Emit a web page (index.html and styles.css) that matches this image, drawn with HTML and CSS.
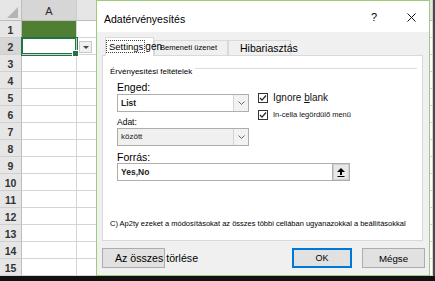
FILE: index.html
```html
<!DOCTYPE html>
<html lang="hu">
<head>
<meta charset="utf-8">
<title>Adatérvényesítés</title>
<link rel="stylesheet" href="styles.css">
</head>
<body>
<div class="screen">
  <div class="sheet">
    <div class="corner"><svg width="11" height="11" viewBox="0 0 11 11"><polygon points="11,0 11,11 0,11" fill="#b4b4b4"/></svg></div>
    <div class="colhdr sel">A</div>
    <div class="colhdr"></div>
    <div class="edge"></div>

    <div class="rowhdr">1</div><div class="cell fill"></div><div class="cell"></div><div class="edge"></div>
    <div class="rowhdr sel">2</div><div class="cell active"></div><div class="cell dd"><span class="ddbtn"><span class="tri"></span></span></div><div class="edge"></div>
    <div class="rowhdr">3</div><div class="cell"></div><div class="cell"></div><div class="edge"></div>
    <div class="rowhdr">4</div><div class="cell"></div><div class="cell"></div><div class="edge"></div>
    <div class="rowhdr">5</div><div class="cell"></div><div class="cell"></div><div class="edge"></div>
    <div class="rowhdr">6</div><div class="cell"></div><div class="cell"></div><div class="edge"></div>
    <div class="rowhdr">7</div><div class="cell"></div><div class="cell"></div><div class="edge"></div>
    <div class="rowhdr">8</div><div class="cell"></div><div class="cell"></div><div class="edge"></div>
    <div class="rowhdr">9</div><div class="cell"></div><div class="cell"></div><div class="edge"></div>
    <div class="rowhdr">10</div><div class="cell"></div><div class="cell"></div><div class="edge"></div>
    <div class="rowhdr">11</div><div class="cell"></div><div class="cell"></div><div class="edge"></div>
    <div class="rowhdr">12</div><div class="cell"></div><div class="cell"></div><div class="edge"></div>
    <div class="rowhdr">13</div><div class="cell"></div><div class="cell"></div><div class="edge"></div>
    <div class="rowhdr">14</div><div class="cell"></div><div class="cell"></div><div class="edge"></div>
    <div class="rowhdr">15</div><div class="cell"></div><div class="cell"></div><div class="edge"></div>
  </div>
  <div class="taskbar"></div>

  <div class="dialog">
    <div class="titlebar">
      <span class="title">Adatérvényesítés</span>
      <div class="ctrls">
        <span class="help">?</span>
        <span class="close"><svg width="9" height="9" viewBox="0 0 9 9"><path d="M0.5 0.5 L8.5 8.5 M8.5 0.5 L0.5 8.5" stroke="#111" stroke-width="1" fill="none"/></svg></span>
      </div>
    </div>
    <div class="body">
      <div class="tabs">
        <div class="tab sel"><span class="focus">Settings</span><span class="gen">gen</span></div>
        <div class="tab t2">Bemeneti üzenet</div>
        <div class="tab t3">Hibariasztás</div>
      </div>
      <div class="panel">
        <div class="grp"><span class="grp-label">Érvényesítési feltételek</span><span class="grp-line"></span></div>
        <div class="form">
          <div class="top">
            <div class="left">
              <div class="lbl big">Enged:</div>
              <div class="select">
                <span class="val">List</span>
                <span class="arrow"><svg width="7" height="4" viewBox="0 0 7 4"><path d="M0.5 0.5 L3.5 3.5 L6.5 0.5" fill="none" stroke="#666" stroke-width="1"/></svg></span>
              </div>
              <div class="lbl small">Adat:</div>
              <div class="select dis">
                <span class="val thin">között</span>
                <span class="arrow"><svg width="7" height="4" viewBox="0 0 7 4"><path d="M0.5 0.5 L3.5 3.5 L6.5 0.5" fill="none" stroke="#666" stroke-width="1"/></svg></span>
              </div>
            </div>
            <div class="right">
              <div class="chk first">
                <svg width="10" height="10" viewBox="0 0 10 10"><rect x="0.5" y="0.5" width="9" height="9" fill="#fff" stroke="#333"/><path d="M2 5 L4 7.2 L8 2.5" fill="none" stroke="#222" stroke-width="1.2"/></svg>
                <span class="chk-text">Ignore <u>b</u>lank</span>
              </div>
              <div class="chk second">
                <svg width="10" height="10" viewBox="0 0 10 10"><rect x="0.5" y="0.5" width="9" height="9" fill="#fff" stroke="#333"/><path d="M2 5 L4 7.2 L8 2.5" fill="none" stroke="#222" stroke-width="1.2"/></svg>
                <span class="chk-text tiny">In-cella legördülő menü</span>
              </div>
            </div>
          </div>
          <div class="lbl big src">Forrás:</div>
          <div class="input">
            <span class="val">Yes,No</span>
            <span class="range"><svg width="8" height="9" viewBox="0 0 8 9"><polygon points="4,0 0,4 8,4" fill="#000"/><rect x="3" y="4" width="2" height="3" fill="#000"/><rect x="0.5" y="8" width="7" height="1" fill="#000"/></svg></span>
          </div>
        </div>
        <div class="note">C) Ap2ty ezeket a módosításokat az összes többi cellában ugyanazokkal a beállításokkal</div>
      </div>
      <div class="buttons">
        <div class="btn clear">Az összes törlése</div>
        <div class="btn ok">OK</div>
        <div class="btn cancel">Mégse</div>
      </div>
    </div>
  </div>
</div>
</body>
</html>
```

FILE: styles.css
```css
* { box-sizing: border-box; margin: 0; padding: 0; }
html, body { width: 435px; height: 281px; overflow: hidden; background: #fff; }
body { font-family: "Liberation Sans", Arial, sans-serif; color: #000; }

.screen { position: relative; width: 435px; height: 281px; overflow: hidden; display: flex; flex-direction: column; }

/* spreadsheet */
.sheet { display: grid; grid-template-columns: 22px 55px 1fr 2px; grid-template-rows: 21px repeat(15, 17px); height: 276px; }
.corner { background: #e6e6e6; border-right: 1px solid #bdbdbd; border-bottom: 1px solid #bdbdbd; display: flex; align-items: flex-end; justify-content: flex-end; padding: 0 3px 2px 0; }
.colhdr { background: #e6e6e6; border-right: 1px solid #cdcdcd; border-bottom: 1px solid #bdbdbd; display: flex; align-items: center; justify-content: center; font-size: 11px; color: #2b2b2b; padding-top: 2px; }
.colhdr.sel { background: #d6d6d6; }
.rowhdr { background: #e6e6e6; border-right: 1px solid #bdbdbd; border-bottom: 1px solid #d0d0d0; display: flex; align-items: center; justify-content: center; font-size: 10.5px; font-weight: bold; color: #333; padding-top: 1px; }
.rowhdr.sel { background: #d6d6d6; }
.cell { background: #fff; border-right: 1px solid #d4d4d4; border-bottom: 1px solid #d4d4d4; }
.cell.fill { background: #507e32; }
.cell.active { position: relative; z-index: 1; box-shadow: 0 0 0 1px #217346, inset 0 0 0 1px #217346; }
.cell.active::after { content: ""; position: absolute; right: -3px; bottom: -3px; width: 5px; height: 5px; background: #217346; border: 1px solid #fff; }
.cell.dd { display: flex; align-items: center; padding: 2px 0 0 2px; }
.ddbtn { width: 13px; height: 12px; background: #f0f0f0; border: 1px solid #c8c8c8; display: flex; align-items: center; justify-content: center; }
.tri { width: 0; height: 0; border-left: 3px solid transparent; border-right: 3px solid transparent; border-top: 3px solid #444; }
.edge { background: #4a4a4a; }
.taskbar { height: 5px; background: #111; }

/* dialog */
.dialog { position: absolute; left: 96px; top: 0; width: 334px; height: 276px; border: 1px solid #9ccb7a; background: #f0f0f0; display: flex; flex-direction: column; }
.titlebar { height: 31px; background: #fff; display: flex; align-items: center; padding: 5px 0 0 7px; }
.title { font-size: 10.5px; line-height: 14px; }
.ctrls { margin-left: auto; display: flex; align-items: center; margin-top: -4px; }
.help { width: 14px; text-align: center; font-size: 11px; line-height: 12px; margin-right: 12px; }
.close { width: 36px; display: flex; justify-content: center; }

.body { flex: 1; display: flex; flex-direction: column; padding: 5px 6px 7px 5px; }

.tabs { height: 18px; display: flex; align-items: flex-end; padding-left: 3px; position: relative; z-index: 1; }
.tab { height: 15px; border: 1px solid #d9d9d9; border-bottom: none; background: #f0f0f0; white-space: nowrap; }
.tab.sel { width: 49px; height: 19px; margin-bottom: -1px; background: #fff; padding: 2px 0 0 0; display: flex; align-items: flex-start; overflow: visible; position: relative; z-index: 2; }
.focus { display: inline-block; border: 1px dotted #444; padding: 0 1px 0 2px; font-size: 9.5px; line-height: 11px; height: 13px; }
.gen { font-size: 10px; line-height: 13px; }
.tab.t2 { width: 74px; padding: 1px 0 0 5px; font-size: 7.6px; line-height: 12px; }
.tab.t3 { width: 63px; padding: 0 0 0 11px; font-size: 10.5px; line-height: 14px; overflow: visible; }

.panel { height: 186px; background: #fff; border: 1px solid #d9d9d9; padding: 0 5px 0 7px; display: flex; flex-direction: column; }
.grp { margin-top: 10px; display: flex; height: 11px; }
.grp-label { font-size: 8px; line-height: 11px; white-space: nowrap; }
.grp-line { flex: 1; height: 1px; background: #dcdcdc; margin: 2px 0 0 3px; }

.form { margin-left: 7px; display: flex; flex-direction: column; }
.top { display: flex; }
.left { width: 132px; display: flex; flex-direction: column; }
.lbl.big { font-size: 10.5px; line-height: 14px; margin-top: 3px; }
.lbl.small { font-size: 8.5px; line-height: 12px; margin-top: 4px; }
.lbl.src { margin-top: 6px; line-height: 11px; }

.select { height: 18px; border: 1px solid #adadad; background: #fff; display: flex; }
.select.dis { background: #f0f0f0; }
.val { flex: 1; padding-left: 3px; font-size: 8.5px; font-weight: bold; line-height: 16px; color: #222; }
.val.thin { font-weight: normal; font-size: 8px; }
.arrow { width: 15px; border-left: 1px solid #d4d4d4; background: #f2f2f2; display: flex; align-items: center; justify-content: center; }

.right { margin-left: 9px; display: flex; flex-direction: column; }
.chk { height: 13px; display: flex; align-items: center; gap: 5px; }
.chk.first { margin-top: 14px; }
.chk.second { margin-top: 4px; }
.chk-text { font-size: 10px; line-height: 13px; white-space: nowrap; color: #111; }
.chk-text.tiny { font-size: 7.5px; }

.input { width: 233px; height: 18px; border: 1px solid #adadad; background: #fff; display: flex; }
.range { width: 17px; background: #e8e8e8; border-left: 1px solid #adadad; box-shadow: inset 0 0 0 1px #d0d0d0; display: flex; align-items: center; justify-content: center; }

.note { margin-top: auto; margin-bottom: 11px; font-size: 7.5px; line-height: 10px; white-space: nowrap; }

.buttons { margin-top: 7px; height: 20px; display: flex; margin-right: -2px; }
.btn { height: 20px; background: #e1e1e1; border: 1px solid #adadad; display: flex; align-items: center; justify-content: center; white-space: nowrap; }
.btn.clear { width: 63px; justify-content: flex-start; padding-left: 12px; font-size: 10.6px; overflow: visible; }
.btn.ok { margin-left: auto; width: 60px; border-color: #0078d7; box-shadow: inset 0 0 0 1px #0078d7; font-size: 9px; }
.btn.cancel { margin-left: 10px; width: 63px; font-size: 9.7px; }
```
